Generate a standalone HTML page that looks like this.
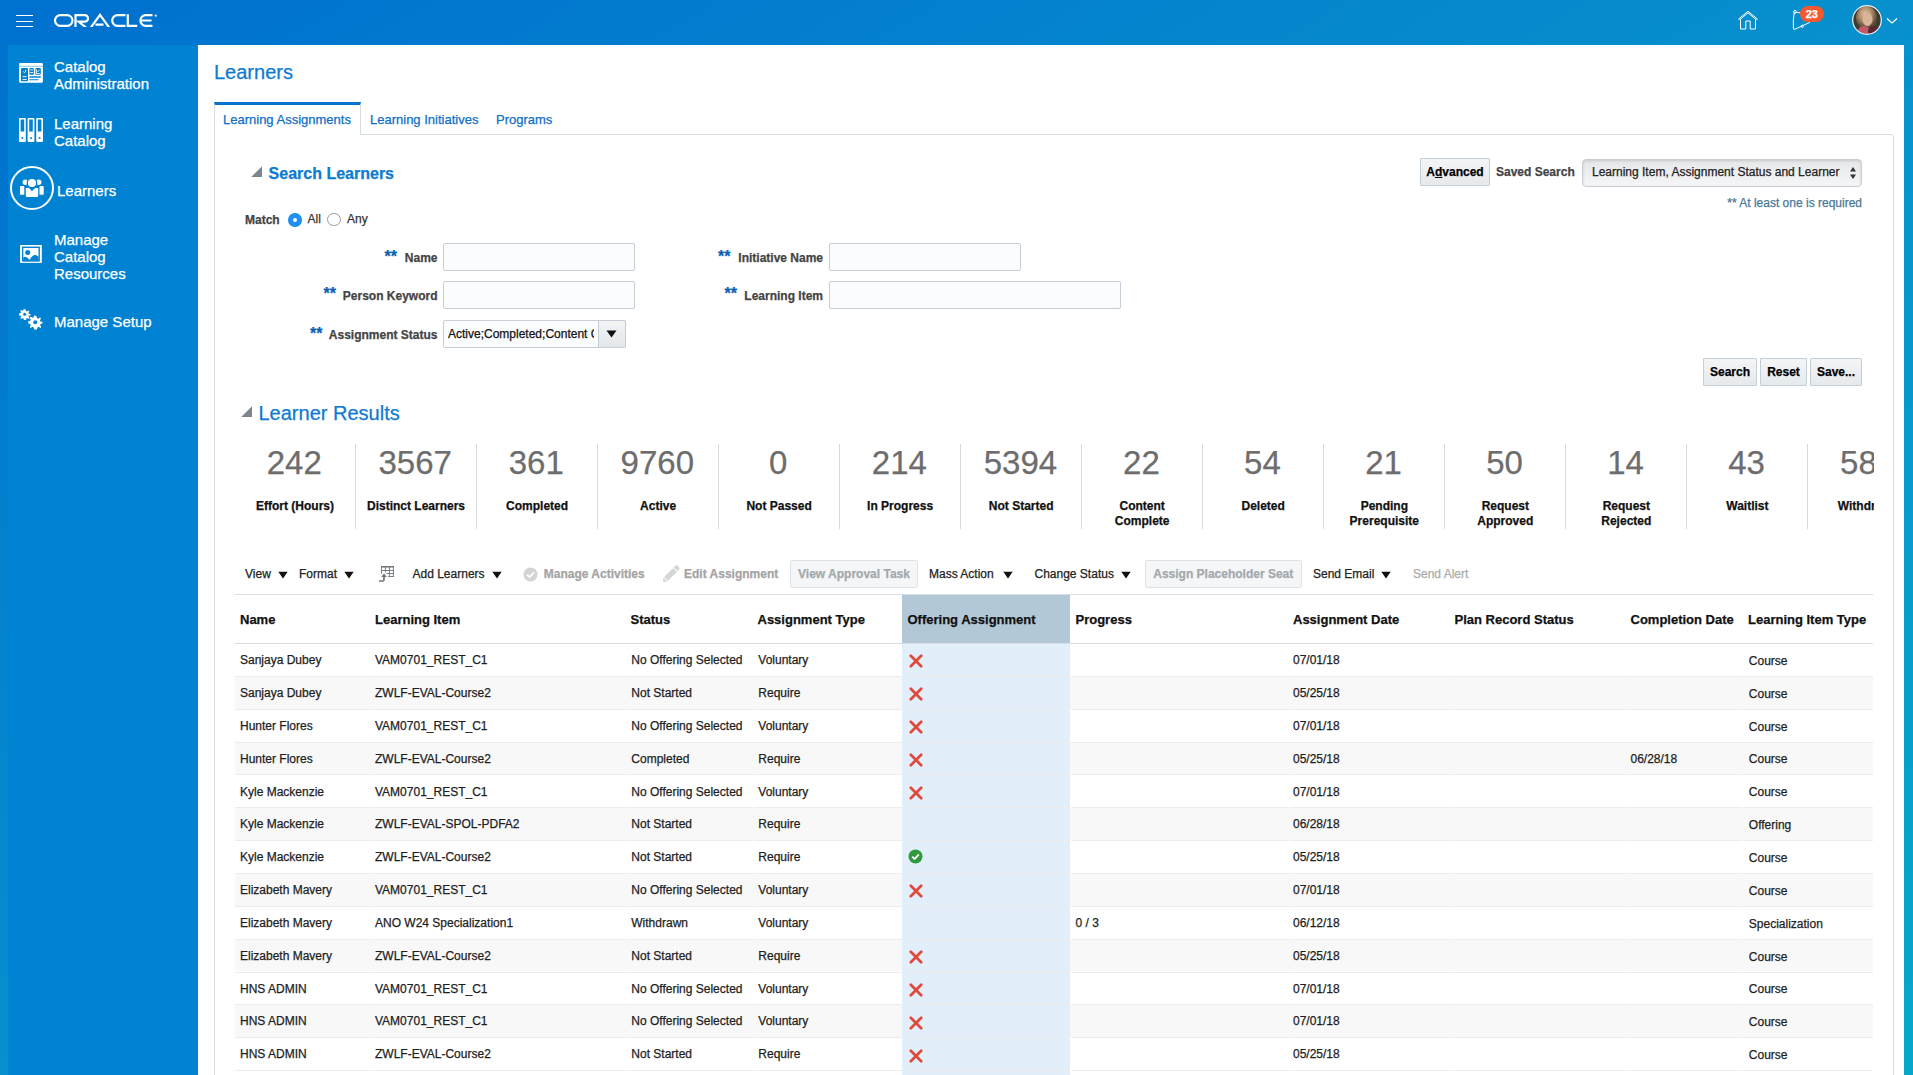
<!DOCTYPE html>
<html><head><meta charset="utf-8"><title>Learners</title>
<style>
html,body{margin:0;padding:0;width:1913px;height:1075px;overflow:hidden;background:#fff}
body{position:relative;font-family:"Liberation Sans",sans-serif}
.t{position:absolute;white-space:nowrap;-webkit-text-stroke-width:0.25px}
.r{position:absolute}
</style></head><body>
<div class="r" style="left:0;top:0;width:1913px;height:1075px;background:linear-gradient(to bottom right,#0070cf 0%,#0790cd 50%,#05a8c9 100%)"></div>
<div class="r" style="left:8.0px;top:45.00px;width:190.0px;height:1030.00px;background:#0082d2"></div>
<div class="r" style="left:198.0px;top:45.00px;width:1706.0px;height:1030.00px;background:#fff"></div>
<div class="r" style="left:16.0px;top:15.00px;width:16.5px;height:1.40px;background:#fff"></div>
<div class="r" style="left:16.0px;top:20.50px;width:16.5px;height:1.40px;background:#fff"></div>
<div class="r" style="left:16.0px;top:26.00px;width:16.5px;height:1.40px;background:#fff"></div>
<svg class="r" style="left:53px;top:13px" width="106" height="16" viewBox="0 0 106 16">
<defs><clipPath id="lc"><rect x="0" y="0" width="106" height="13.95"/></clipPath></defs>
<g fill="none" stroke="#fff" stroke-width="2.2" clip-path="url(#lc)">
<rect x="2" y="2.2" width="17.5" height="10.6" rx="5.3"/>
<path d="M22.5 14V2.2h9.3a3.2 3.2 0 0 1 0 6.4h-6.2l7.5 6"/>
<path d="M37.5 15L47 1.9 56.5 15M42.5 11.7h8" />
<path d="M72.5 2.2h-8a5.3 5.3 0 0 0 0 10.6h8"/>
<path d="M74.8 1.2v11.6h9.5"/>
<path d="M99.5 2.2h-6.8a5.3 5.3 0 0 0 0 10.6h6.8M88.5 7.5h10"/>
</g>
<circle cx="102.8" cy="2.6" r="1.2" fill="#cfe3f5"/>
</svg>
<svg class="r" style="left:1736px;top:9px" width="24" height="22" viewBox="0 0 24 22">
<g fill="none" stroke="#fff" stroke-width="1">
<path d="M2.3 10.2L12 2.3l9.7 7.9"/><path d="M3.3 11L12 3.9l8.7 7.1"/>
<path d="M4.5 10.3v9.7h5.3v-8h4.4v8h5.3v-9.7"/>
</g></svg>
<svg class="r" style="left:1790px;top:9px" width="24" height="22" viewBox="0 0 24 22">
<g fill="none" stroke="#fff" stroke-width="1">
<path d="M6.2 3.2L19 5.5 19.5 13.5 5 20.2Q3.3 20.8 3.4 19 2.8 12 4.2 4 4.6 3 6.2 3.2z"/>
<circle cx="5" cy="2.8" r="1.4"/><circle cx="12.3" cy="17.3" r="1.1"/>
</g></svg>
<div class="r" style="left:1799.5px;top:6.00px;width:24.5px;height:15.50px;background:#f5582e;border-radius:8px"></div>
<div class="t" style="left:1799.5px;top:7.19px;font-size:11px;line-height:14px;color:#fff;font-weight:bold;width:24.5px;text-align:center">23</div>
<svg class="r" style="left:1852px;top:5px" width="30" height="30" viewBox="0 0 30 30">
<defs><clipPath id="av"><circle cx="15" cy="15" r="14"/></clipPath>
<radialGradient id="hair" cx="45%" cy="35%" r="55%"><stop offset="0" stop-color="#e0c8a8"/><stop offset=".5" stop-color="#b89470"/><stop offset="1" stop-color="#5a4a38"/></radialGradient></defs>
<g clip-path="url(#av)">
<rect width="30" height="30" fill="#3e3a2c"/>
<ellipse cx="14.5" cy="13" rx="10.5" ry="12" fill="url(#hair)"/>
<ellipse cx="15.5" cy="14.5" rx="5" ry="6.5" fill="#d9b49a"/>
<ellipse cx="12" cy="26" rx="6" ry="5" fill="#c0586a"/>
<ellipse cx="21" cy="26" rx="5" ry="5" fill="#5a2a30"/>
</g>
<circle cx="15" cy="15" r="14.3" fill="none" stroke="#e8eef2" stroke-width="1.2"/>
</svg>
<svg class="r" style="left:1886px;top:17px" width="12" height="8" viewBox="0 0 12 8"><path d="M1 1.5l5 4.5 5-4.5" fill="none" stroke="#fff" stroke-width="1.2"/></svg>
<div class="t" style="left:54.0px;top:56.90px;font-size:15px;line-height:19px;color:#fff;font-weight:normal;">Catalog</div>
<div class="t" style="left:54.0px;top:74.30px;font-size:15px;line-height:19px;color:#fff;font-weight:normal;">Administration</div>
<div class="t" style="left:54.0px;top:113.70px;font-size:15px;line-height:19px;color:#fff;font-weight:normal;">Learning</div>
<div class="t" style="left:54.0px;top:131.30px;font-size:15px;line-height:19px;color:#fff;font-weight:normal;">Catalog</div>
<div class="t" style="left:57.0px;top:180.80px;font-size:15px;line-height:19px;color:#fff;font-weight:normal;">Learners</div>
<div class="t" style="left:54.0px;top:229.80px;font-size:15px;line-height:19px;color:#fff;font-weight:normal;">Manage</div>
<div class="t" style="left:54.0px;top:247.30px;font-size:15px;line-height:19px;color:#fff;font-weight:normal;">Catalog</div>
<div class="t" style="left:54.0px;top:264.30px;font-size:15px;line-height:19px;color:#fff;font-weight:normal;">Resources</div>
<div class="t" style="left:54.0px;top:312.30px;font-size:15px;line-height:19px;color:#fff;font-weight:normal;">Manage Setup</div>
<svg class="r" style="left:16px;top:58px" width="30" height="30" viewBox="0 0 30 30">
<rect x="3.1" y="4.9" width="23.8" height="19.9" rx="1.2" fill="#fff"/>
<rect x="3.1" y="7.8" width="23.8" height="1" fill="#0082d2" opacity=".45"/>
<g fill="#0082d2">
<rect x="5" y="9.9" width="7" height="13.3" rx="1"/>
<rect x="13.4" y="10" width="4.5" height="6.7" rx="1"/>
<rect x="19.3" y="10" width="5.5" height="6.7" rx="1"/>
<rect x="13.2" y="18.3" width="11.8" height="1.4" rx=".7"/>
<rect x="13.2" y="21.2" width="9.5" height="1.1" rx=".55"/>
</g>
<g fill="none" stroke="#fff" stroke-width=".9">
<path d="M7 13.3l1.4 1.4 1.6-1.6"/><path d="M14.2 14.5h2.9"/><path d="M20.4 11.3v4.2h3.3M21.5 14l2-2.2"/>
</g>
<g fill="#fff"><rect x="6.6" y="18.2" width="4" height=".9"/><rect x="6.6" y="21" width="4" height=".9"/><circle cx="9.6" cy="12.4" r=".6"/></g>
<rect x="14.2" y="11" width="2.9" height="1.6" fill="#fff" opacity=".5"/>
</svg>
<svg class="r" style="left:19px;top:118px" width="25" height="25" viewBox="0 0 25 25">
<g fill="#fff"><rect x="0" y="0" width="6.8" height="24" rx="1"/><rect x="8.6" y="0" width="6.8" height="24" rx="1"/><rect x="17.2" y="0" width="6.8" height="24" rx="1"/></g>
<g fill="#0082d2"><rect x="1.6" y="1.5" width="3.6" height="12"/><rect x="10.2" y="1.5" width="3.6" height="12"/><rect x="18.8" y="1.5" width="3.6" height="12"/>
<circle cx="3.4" cy="20" r="1"/><circle cx="12" cy="20" r="1"/><circle cx="20.6" cy="20" r="1"/></g>
</svg>
<svg class="r" style="left:9px;top:165px" width="46" height="46" viewBox="0 0 46 46">
<circle cx="23" cy="23" r="21" fill="none" stroke="#fff" stroke-width="2"/>
<g fill="#fff">
<circle cx="16.3" cy="17.2" r="2.7"/><circle cx="29.7" cy="17.2" r="2.7"/>
</g>
<circle cx="23" cy="18" r="5.4" fill="#0082d2"/>
<circle cx="23" cy="18" r="4.1" fill="#fff"/>
<g fill="#fff">
<path d="M17.6 22.9h2.4l3 3.4 3-3.4h2.4q.8 0 .8.8v7.4q0 .8-.8.8H17.6q-.8 0-.8-.8v-7.4q0-.8.8-.8z"/>
<path d="M12 21h2.3q1 0 1 1v7q0 .8-.8.8H11.8q-.8 0-.8-.8v-7q0-1 1-1z"/>
<path d="M31.7 21h2q1 0 1 1v7q0 .8-.8.8h-2.6q-.8 0-.8-.8v-7q0-1 1.2-1z"/>
</g>
</svg>
<svg class="r" style="left:14px;top:238px" width="34" height="32" viewBox="0 0 34 32">
<rect x="6.1" y="7" width="21.7" height="17.9" fill="#fff"/>
<rect x="8" y="8.6" width="17.9" height="14.8" fill="#0082d2"/>
<rect x="9.3" y="10" width="15.2" height="12" fill="#fff"/>
<circle cx="13.7" cy="14.4" r="2.5" fill="#0082d2"/>
<path d="M9.2 19.6Q10.5 18.5 11.9 19Q13.5 19.8 15.6 21.7Q18.5 16.5 21.4 17Q23 17.3 24.6 18.8V23.5H9.2z" fill="#0082d2"/>
</svg>
<svg class="r" style="left:18px;top:307px" width="26" height="24" viewBox="0 0 26 24">
<g fill="#fff" transform="translate(-0.3 1)">
<path id="g1" d="M7 1.2l1 .2.4 1.6 1 .5 1.4-.9.8.7-.9 1.4.5 1 1.6.4.1 1.1-1.6.5-.4 1 .9 1.4-.7.8-1.4-.9-1 .5-.4 1.6H6.2l-.4-1.6-1-.5-1.4.9-.8-.7.9-1.4-.5-1-1.6-.4V5.5l1.6-.4.4-1-.9-1.4.8-.8 1.4.9 1-.5.4-1.6z"/>
</g>
<circle cx="6.7" cy="7.3" r="1.5" fill="#0082d2"/>
<g transform="translate(8.5 7.3) scale(1.25)" fill="#fff">
<path d="M7 1.2l1 .2.4 1.6 1 .5 1.4-.9.8.7-.9 1.4.5 1 1.6.4.1 1.1-1.6.5-.4 1 .9 1.4-.7.8-1.4-.9-1 .5-.4 1.6H6.2l-.4-1.6-1-.5-1.4.9-.8-.7.9-1.4-.5-1-1.6-.4V5.5l1.6-.4.4-1-.9-1.4.8-.8 1.4.9 1-.5.4-1.6z"/>
<circle cx="7" cy="6.3" r="1.6" fill="#0082d2"/>
</g>
</svg>
<div class="t" style="left:214.0px;top:59.66px;font-size:20px;line-height:25px;color:#0e7bd0;font-weight:normal;">Learners</div>
<div class="r" style="left:214.0px;top:134.00px;width:1680.0px;height:941.00px;border-top:1px solid #d4dde4;border-left:1px solid #d4dde4;border-right:1px solid #d4dde4;border-top-right-radius:4px;box-sizing:border-box;background:#fff"></div>
<div class="r" style="left:214.0px;top:102.00px;width:147.0px;height:33.00px;background:#fff;border-left:1px solid #d4dde4;border-right:1px solid #d4dde4;border-top:3px solid #0572ce;box-sizing:border-box"></div>
<div class="t" style="left:223.0px;top:110.69px;font-size:13px;line-height:17px;color:#0f6fc6;font-weight:normal;">Learning Assignments</div>
<div class="t" style="left:370.0px;top:110.69px;font-size:13px;line-height:17px;color:#0f6fc6;font-weight:normal;">Learning Initiatives</div>
<div class="t" style="left:496.0px;top:110.69px;font-size:13px;line-height:17px;color:#0f6fc6;font-weight:normal;">Programs</div>
<svg class="r" style="left:251px;top:166px" width="12" height="12" viewBox="0 0 12 12"><path d="M11 0.2V11H0.2z" fill="#7d868e"/></svg>
<div class="t" style="left:268.6px;top:163.95px;font-size:16px;line-height:20px;color:#0b7cd0;font-weight:bold;">Search Learners</div>
<div class="t" style="left:245.0px;top:212.84px;font-size:12px;line-height:15px;color:#444;font-weight:bold;">Match</div>
<div class="r" style="left:288.0px;top:213.00px;width:13.5px;height:13.50px;border-radius:50%;background:#1e90f3"></div>
<div class="r" style="left:292.5px;top:217.50px;width:4.5px;height:4.50px;border-radius:50%;background:#fff"></div>
<div class="t" style="left:307.5px;top:212.04px;font-size:12px;line-height:15px;color:#333;font-weight:normal;">All</div>
<div class="r" style="left:327.0px;top:212.50px;width:13.5px;height:13.50px;border-radius:50%;border:1px solid #9a9a9a;box-sizing:border-box;background:#fff"></div>
<div class="t" style="left:347.0px;top:212.04px;font-size:12px;line-height:15px;color:#333;font-weight:normal;">Any</div>
<div class="t" style="left:137.5px;top:251.34px;font-size:12px;line-height:15px;color:#444;font-weight:bold;width:300px;text-align:right">Name</div>
<div class="t" style="left:357.0px;top:246.95px;font-size:16px;line-height:20px;color:#0b5fb5;font-weight:bold;width:40px;text-align:right">**</div>
<div class="t" style="left:137.5px;top:288.84px;font-size:12px;line-height:15px;color:#444;font-weight:bold;width:300px;text-align:right">Person Keyword</div>
<div class="t" style="left:296.0px;top:284.45px;font-size:16px;line-height:20px;color:#0b5fb5;font-weight:bold;width:40px;text-align:right">**</div>
<div class="t" style="left:137.5px;top:328.34px;font-size:12px;line-height:15px;color:#444;font-weight:bold;width:300px;text-align:right">Assignment Status</div>
<div class="t" style="left:282.5px;top:323.95px;font-size:16px;line-height:20px;color:#0b5fb5;font-weight:bold;width:40px;text-align:right">**</div>
<div class="t" style="left:523.0px;top:251.34px;font-size:12px;line-height:15px;color:#444;font-weight:bold;width:300px;text-align:right">Initiative Name</div>
<div class="t" style="left:690.5px;top:246.95px;font-size:16px;line-height:20px;color:#0b5fb5;font-weight:bold;width:40px;text-align:right">**</div>
<div class="t" style="left:523.0px;top:288.84px;font-size:12px;line-height:15px;color:#444;font-weight:bold;width:300px;text-align:right">Learning Item</div>
<div class="t" style="left:697.0px;top:284.45px;font-size:16px;line-height:20px;color:#0b5fb5;font-weight:bold;width:40px;text-align:right">**</div>
<div class="r" style="left:443.0px;top:243.00px;width:192.0px;height:28.00px;border:1px solid #c5ced6;border-radius:2px;background:#fbfcfe;box-sizing:border-box"></div>
<div class="r" style="left:443.0px;top:281.00px;width:192.0px;height:28.00px;border:1px solid #c5ced6;border-radius:2px;background:#fbfcfe;box-sizing:border-box"></div>
<div class="r" style="left:829.0px;top:243.00px;width:192.0px;height:28.00px;border:1px solid #c5ced6;border-radius:2px;background:#fbfcfe;box-sizing:border-box"></div>
<div class="r" style="left:829.0px;top:281.00px;width:292.0px;height:28.00px;border:1px solid #c5ced6;border-radius:2px;background:#fbfcfe;box-sizing:border-box"></div>
<div class="r" style="left:443.0px;top:320.00px;width:183.0px;height:28.00px;border:1px solid #c5ced6;border-radius:2px;background:#fbfcfe;box-sizing:border-box"></div>
<div class="r" style="left:598.0px;top:320.00px;width:28.0px;height:28.00px;border:1px solid #c5ced6;border-radius:0 2px 2px 0;background:linear-gradient(#f2f4f6,#e3e7ea);box-sizing:border-box"></div>
<svg class="r" style="left:606px;top:330px" width="11" height="8" viewBox="0 0 11 8"><path d="M0.5 0.5h10L5.5 7.5z" fill="#111"/></svg>
<div class="t" style="left:448.0px;top:326.84px;font-size:12px;line-height:15px;color:#111;font-weight:normal;width:146px;overflow:hidden;white-space:nowrap">Active;Completed;Content Complete</div>
<div class="r" style="left:1420.0px;top:158.00px;width:70.0px;height:28.00px;border:1px solid #c4ced7;border-radius:1px;background:linear-gradient(#f4f5f7,#e6e9ec);box-sizing:border-box"></div>
<div class="t" style="left:1420.0px;top:164.74px;font-size:12px;line-height:15px;color:#000;font-weight:bold;width:70px;text-align:center">A<u style="text-decoration:underline">d</u>vanced</div>
<div class="t" style="left:1496.0px;top:164.74px;font-size:12px;line-height:15px;color:#444;font-weight:bold;">Saved Search</div>
<div class="r" style="left:1582.0px;top:159.00px;width:280.0px;height:28.00px;border:1px solid #c8ced4;border-radius:4px;background:linear-gradient(#e6e7e8,#f5f6f7);box-shadow:inset 0 1px 3px rgba(0,0,0,.14);box-sizing:border-box"></div>
<div class="t" style="left:1592.0px;top:164.74px;font-size:12px;line-height:15px;color:#222;font-weight:normal;">Learning Item, Assignment Status and Learner</div>
<svg class="r" style="left:1849px;top:166px" width="8" height="14" viewBox="0 0 8 14"><path d="M4 1L7 5.5H1zM4 13L7 8.5H1z" fill="#333"/></svg>
<div class="t" style="left:1662.0px;top:195.84px;font-size:12px;line-height:15px;color:#4a7896;font-weight:normal;width:200px;text-align:right">** At least one is required</div>
<div class="r" style="left:1703.0px;top:358.00px;width:54.0px;height:28.00px;border:1px solid #c4ced7;border-radius:1px;background:linear-gradient(#f4f5f7,#e6e9ec);box-sizing:border-box"></div>
<div class="t" style="left:1703.0px;top:364.54px;font-size:12px;line-height:15px;color:#000;font-weight:bold;width:54px;text-align:center">Search</div>
<div class="r" style="left:1760.0px;top:358.00px;width:47.0px;height:28.00px;border:1px solid #c4ced7;border-radius:1px;background:linear-gradient(#f4f5f7,#e6e9ec);box-sizing:border-box"></div>
<div class="t" style="left:1760.0px;top:364.54px;font-size:12px;line-height:15px;color:#000;font-weight:bold;width:47px;text-align:center">Reset</div>
<div class="r" style="left:1810.0px;top:358.00px;width:52.0px;height:28.00px;border:1px solid #c4ced7;border-radius:1px;background:linear-gradient(#f4f5f7,#e6e9ec);box-sizing:border-box"></div>
<div class="t" style="left:1810.0px;top:364.54px;font-size:12px;line-height:15px;color:#000;font-weight:bold;width:52px;text-align:center">Save...</div>
<svg class="r" style="left:241px;top:406px" width="12" height="12" viewBox="0 0 12 12"><path d="M11 0.2V11H0.2z" fill="#7d868e"/></svg>
<div class="t" style="left:258.5px;top:400.56px;font-size:20px;line-height:25px;color:#0e7bd0;font-weight:normal;">Learner Results</div>
<div class="r" style="left:234px;top:440px;width:1639.5px;height:100px;overflow:hidden">
<div class="t" style="left:-0.3px;top:1.86px;font-size:33px;line-height:42px;color:#6d6d6d;font-weight:normal;width:121px;text-align:center">242</div>
<div class="t" style="left:0.5px;top:59.14px;font-size:12px;line-height:15px;color:#111;font-weight:bold;width:121px;text-align:center">Effort (Hours)</div>
<div class="t" style="left:120.7px;top:1.86px;font-size:33px;line-height:42px;color:#6d6d6d;font-weight:normal;width:121px;text-align:center">3567</div>
<div class="t" style="left:121.5px;top:59.14px;font-size:12px;line-height:15px;color:#111;font-weight:bold;width:121px;text-align:center">Distinct Learners</div>
<div class="r" style="left:121.0px;top:4.00px;width:1.0px;height:84.50px;background:#d9d9d9"></div>
<div class="t" style="left:241.8px;top:1.86px;font-size:33px;line-height:42px;color:#6d6d6d;font-weight:normal;width:121px;text-align:center">361</div>
<div class="t" style="left:242.6px;top:59.14px;font-size:12px;line-height:15px;color:#111;font-weight:bold;width:121px;text-align:center">Completed</div>
<div class="r" style="left:242.0px;top:4.00px;width:1.0px;height:84.50px;background:#d9d9d9"></div>
<div class="t" style="left:362.8px;top:1.86px;font-size:33px;line-height:42px;color:#6d6d6d;font-weight:normal;width:121px;text-align:center">9760</div>
<div class="t" style="left:363.6px;top:59.14px;font-size:12px;line-height:15px;color:#111;font-weight:bold;width:121px;text-align:center">Active</div>
<div class="r" style="left:363.1px;top:4.00px;width:1.0px;height:84.50px;background:#d9d9d9"></div>
<div class="t" style="left:483.8px;top:1.86px;font-size:33px;line-height:42px;color:#6d6d6d;font-weight:normal;width:121px;text-align:center">0</div>
<div class="t" style="left:484.6px;top:59.14px;font-size:12px;line-height:15px;color:#111;font-weight:bold;width:121px;text-align:center">Not Passed</div>
<div class="r" style="left:484.1px;top:4.00px;width:1.0px;height:84.50px;background:#d9d9d9"></div>
<div class="t" style="left:604.9px;top:1.86px;font-size:33px;line-height:42px;color:#6d6d6d;font-weight:normal;width:121px;text-align:center">214</div>
<div class="t" style="left:605.6px;top:59.14px;font-size:12px;line-height:15px;color:#111;font-weight:bold;width:121px;text-align:center">In Progress</div>
<div class="r" style="left:605.1px;top:4.00px;width:1.0px;height:84.50px;background:#d9d9d9"></div>
<div class="t" style="left:725.9px;top:1.86px;font-size:33px;line-height:42px;color:#6d6d6d;font-weight:normal;width:121px;text-align:center">5394</div>
<div class="t" style="left:726.7px;top:59.14px;font-size:12px;line-height:15px;color:#111;font-weight:bold;width:121px;text-align:center">Not Started</div>
<div class="r" style="left:726.1px;top:4.00px;width:1.0px;height:84.50px;background:#d9d9d9"></div>
<div class="t" style="left:846.9px;top:1.86px;font-size:33px;line-height:42px;color:#6d6d6d;font-weight:normal;width:121px;text-align:center">22</div>
<div class="t" style="left:847.7px;top:59.14px;font-size:12px;line-height:15px;color:#111;font-weight:bold;width:121px;text-align:center">Content<br>Complete</div>
<div class="r" style="left:847.2px;top:4.00px;width:1.0px;height:84.50px;background:#d9d9d9"></div>
<div class="t" style="left:967.9px;top:1.86px;font-size:33px;line-height:42px;color:#6d6d6d;font-weight:normal;width:121px;text-align:center">54</div>
<div class="t" style="left:968.7px;top:59.14px;font-size:12px;line-height:15px;color:#111;font-weight:bold;width:121px;text-align:center">Deleted</div>
<div class="r" style="left:968.2px;top:4.00px;width:1.0px;height:84.50px;background:#d9d9d9"></div>
<div class="t" style="left:1089.0px;top:1.86px;font-size:33px;line-height:42px;color:#6d6d6d;font-weight:normal;width:121px;text-align:center">21</div>
<div class="t" style="left:1089.8px;top:59.14px;font-size:12px;line-height:15px;color:#111;font-weight:bold;width:121px;text-align:center">Pending<br>Prerequisite</div>
<div class="r" style="left:1089.2px;top:4.00px;width:1.0px;height:84.50px;background:#d9d9d9"></div>
<div class="t" style="left:1210.0px;top:1.86px;font-size:33px;line-height:42px;color:#6d6d6d;font-weight:normal;width:121px;text-align:center">50</div>
<div class="t" style="left:1210.8px;top:59.14px;font-size:12px;line-height:15px;color:#111;font-weight:bold;width:121px;text-align:center">Request<br>Approved</div>
<div class="r" style="left:1210.3px;top:4.00px;width:1.0px;height:84.50px;background:#d9d9d9"></div>
<div class="t" style="left:1331.0px;top:1.86px;font-size:33px;line-height:42px;color:#6d6d6d;font-weight:normal;width:121px;text-align:center">14</div>
<div class="t" style="left:1331.8px;top:59.14px;font-size:12px;line-height:15px;color:#111;font-weight:bold;width:121px;text-align:center">Request<br>Rejected</div>
<div class="r" style="left:1331.3px;top:4.00px;width:1.0px;height:84.50px;background:#d9d9d9"></div>
<div class="t" style="left:1452.1px;top:1.86px;font-size:33px;line-height:42px;color:#6d6d6d;font-weight:normal;width:121px;text-align:center">43</div>
<div class="t" style="left:1452.9px;top:59.14px;font-size:12px;line-height:15px;color:#111;font-weight:bold;width:121px;text-align:center">Waitlist</div>
<div class="r" style="left:1452.3px;top:4.00px;width:1.0px;height:84.50px;background:#d9d9d9"></div>
<div class="t" style="left:1573.1px;top:1.86px;font-size:33px;line-height:42px;color:#6d6d6d;font-weight:normal;width:121px;text-align:center">580</div>
<div class="t" style="left:1573.9px;top:59.14px;font-size:12px;line-height:15px;color:#111;font-weight:bold;width:121px;text-align:center">Withdrawn</div>
<div class="r" style="left:1573.4px;top:4.00px;width:1.0px;height:84.50px;background:#d9d9d9"></div>
</div>
<div class="t" style="left:245.0px;top:566.54px;font-size:12px;line-height:15px;color:#222;font-weight:normal;">View</div>
<svg class="r" style="left:278px;top:571px" width="10" height="8" viewBox="0 0 10 8"><path d="M0.3 0.8h9.4L5 7.6z" fill="#111"/></svg>
<div class="t" style="left:299.0px;top:566.54px;font-size:12px;line-height:15px;color:#222;font-weight:normal;">Format</div>
<svg class="r" style="left:343.5px;top:571px" width="10" height="8" viewBox="0 0 10 8"><path d="M0.3 0.8h9.4L5 7.6z" fill="#111"/></svg>
<svg class="r" style="left:374px;top:562px" width="26" height="24" viewBox="0 0 26 24">
<g fill="none" stroke="#6f767b" stroke-width="0.9">
<path d="M7.1 4.6h12.8M7.1 8.5h12.8M12.4 11.5h7.5M14.2 14.5h5.7M7.5 4.1v7.5M11.4 4.1v6.3M15.4 4.1v10.8M19.4 4.1v10.8"/>
</g>
<rect x="7.1" y="4.1" width="12.8" height="1.4" fill="#6f767b"/>
<path d="M10 11.6L12.9 14.9H7.1z" fill="#6f767b"/>
<path d="M10 14.5V17.6Q10 19 8.6 19H5.1" fill="none" stroke="#6f767b" stroke-width="1.7"/>
</svg>
<div class="t" style="left:412.5px;top:566.54px;font-size:12px;line-height:15px;color:#222;font-weight:normal;">Add Learners</div>
<svg class="r" style="left:491.5px;top:571px" width="10" height="8" viewBox="0 0 10 8"><path d="M0.3 0.8h9.4L5 7.6z" fill="#111"/></svg>
<svg class="r" style="left:522.6px;top:566.7px" width="15" height="15" viewBox="0 0 15 15"><circle cx="7.5" cy="7.5" r="7" fill="#d4d4d4"/><path d="M4 7.6l2.5 2.5 4.7-4.7" fill="none" stroke="#fff" stroke-width="1.8"/></svg>
<div class="t" style="left:543.8px;top:566.54px;font-size:12px;line-height:15px;color:#a4a4a4;font-weight:bold;">Manage Activities</div>
<svg class="r" style="left:658px;top:560px" width="30" height="26" viewBox="0 0 30 26"><g fill="#d3d5d7"><path d="M5 22L9.4 21.4 5.6 17.6z"/><path d="M10 20.8L6.2 17 15 8.2 18.8 12z"/><path d="M19.5 11.3L15.7 7.5 17.8 5.4Q18.6 4.6 19.4 5.4L21.4 7.4Q22.2 8.2 21.4 9z"/></g></svg>
<div class="t" style="left:684.0px;top:566.54px;font-size:12px;line-height:15px;color:#a4a4a4;font-weight:bold;">Edit Assignment</div>
<div class="r" style="left:790.0px;top:560.00px;width:128.0px;height:27.50px;border:1px solid #dde2e6;border-radius:2px;background:#f5f6f7;box-sizing:border-box"></div>
<div class="t" style="left:790.0px;top:566.74px;font-size:12px;line-height:15px;color:#a3a9ad;font-weight:bold;width:128px;text-align:center">View Approval Task</div>
<div class="t" style="left:929.0px;top:566.54px;font-size:12px;line-height:15px;color:#222;font-weight:normal;">Mass Action</div>
<svg class="r" style="left:1002.5px;top:571px" width="10" height="8" viewBox="0 0 10 8"><path d="M0.3 0.8h9.4L5 7.6z" fill="#111"/></svg>
<div class="t" style="left:1034.5px;top:566.54px;font-size:12px;line-height:15px;color:#222;font-weight:normal;">Change Status</div>
<svg class="r" style="left:1120.5px;top:571px" width="10" height="8" viewBox="0 0 10 8"><path d="M0.3 0.8h9.4L5 7.6z" fill="#111"/></svg>
<div class="r" style="left:1145.0px;top:560.00px;width:156.5px;height:27.50px;border:1px solid #dde2e6;border-radius:2px;background:#f5f6f7;box-sizing:border-box"></div>
<div class="t" style="left:1145.0px;top:566.74px;font-size:12px;line-height:15px;color:#a3a9ad;font-weight:bold;width:156.5px;text-align:center">Assign Placeholder Seat</div>
<div class="t" style="left:1313.0px;top:566.54px;font-size:12px;line-height:15px;color:#222;font-weight:normal;">Send Email</div>
<svg class="r" style="left:1380.5px;top:571px" width="10" height="8" viewBox="0 0 10 8"><path d="M0.3 0.8h9.4L5 7.6z" fill="#111"/></svg>
<div class="t" style="left:1413.0px;top:566.54px;font-size:12px;line-height:15px;color:#ababab;font-weight:normal;">Send Alert</div>
<div class="r" style="left:234.5px;top:594.00px;width:1638.5px;height:1.00px;background:#d7dfe6"></div>
<div class="r" style="left:902.0px;top:595.00px;width:168.0px;height:48.50px;background:#b3c8d7"></div>
<div class="r" style="left:902.0px;top:644.30px;width:168.0px;height:431.00px;background:#e2effb"></div>
<div class="t" style="left:240.0px;top:610.69px;font-size:13px;line-height:17px;color:#111;font-weight:bold;">Name</div>
<div class="t" style="left:375.0px;top:610.69px;font-size:13px;line-height:17px;color:#111;font-weight:bold;">Learning Item</div>
<div class="t" style="left:630.5px;top:610.69px;font-size:13px;line-height:17px;color:#111;font-weight:bold;">Status</div>
<div class="t" style="left:757.5px;top:610.69px;font-size:13px;line-height:17px;color:#111;font-weight:bold;">Assignment Type</div>
<div class="t" style="left:907.5px;top:610.69px;font-size:13px;line-height:17px;color:#111;font-weight:bold;">Offering Assignment</div>
<div class="t" style="left:1075.5px;top:610.69px;font-size:13px;line-height:17px;color:#111;font-weight:bold;">Progress</div>
<div class="t" style="left:1293.0px;top:610.69px;font-size:13px;line-height:17px;color:#111;font-weight:bold;">Assignment Date</div>
<div class="t" style="left:1454.5px;top:610.69px;font-size:13px;line-height:17px;color:#111;font-weight:bold;">Plan Record Status</div>
<div class="t" style="left:1630.5px;top:610.69px;font-size:13px;line-height:17px;color:#111;font-weight:bold;">Completion Date</div>
<div class="t" style="left:1748.0px;top:610.69px;font-size:13px;line-height:17px;color:#111;font-weight:bold;">Learning Item Type</div>
<div class="r" style="left:234.5px;top:643.00px;width:1638.5px;height:1.30px;background:#d5dee6"></div>
<div class="r" style="left:234.5px;top:675.85px;width:135.0px;height:1.00px;background:#ececec"></div>
<div class="r" style="left:370.5px;top:675.85px;width:254.5px;height:1.00px;background:#ececec"></div>
<div class="r" style="left:626.0px;top:675.85px;width:126.0px;height:1.00px;background:#ececec"></div>
<div class="r" style="left:753.0px;top:675.85px;width:149.0px;height:1.00px;background:#ececec"></div>
<div class="r" style="left:903.0px;top:675.85px;width:167.0px;height:1.00px;background:#ececec"></div>
<div class="r" style="left:1071.0px;top:675.85px;width:216.5px;height:1.00px;background:#ececec"></div>
<div class="r" style="left:1288.5px;top:675.85px;width:160.5px;height:1.00px;background:#ececec"></div>
<div class="r" style="left:1450.0px;top:675.85px;width:175.0px;height:1.00px;background:#ececec"></div>
<div class="r" style="left:1626.0px;top:675.85px;width:116.5px;height:1.00px;background:#ececec"></div>
<div class="r" style="left:1743.5px;top:675.85px;width:129.5px;height:1.00px;background:#ececec"></div>
<div class="t" style="left:240.0px;top:653.14px;font-size:12px;line-height:15px;color:#1e1e1e;font-weight:normal;">Sanjaya Dubey</div>
<div class="t" style="left:375.0px;top:653.14px;font-size:12px;line-height:15px;color:#1e1e1e;font-weight:normal;">VAM0701_REST_C1</div>
<div class="t" style="left:631.3px;top:653.14px;font-size:12px;line-height:15px;color:#1e1e1e;font-weight:normal;">No Offering Selected</div>
<div class="t" style="left:758.3px;top:653.14px;font-size:12px;line-height:15px;color:#1e1e1e;font-weight:normal;">Voluntary</div>
<svg class="r" style="left:908.5px;top:654.30px" width="14" height="14" viewBox="0 0 14 14"><path d="M1.8 1.8l10.4 10.4M12.2 1.8l-10.4 10.4" stroke="#e0483b" stroke-width="2.7" stroke-linecap="round"/></svg>
<div class="t" style="left:1293.0px;top:653.14px;font-size:12px;line-height:15px;color:#1e1e1e;font-weight:normal;">07/01/18</div>
<div class="t" style="left:1748.8px;top:653.94px;font-size:12px;line-height:15px;color:#1e1e1e;font-weight:normal;">Course</div>
<div class="r" style="left:234.5px;top:676.85px;width:135.0px;height:31.85px;background:#f8f8f8"></div>
<div class="r" style="left:369.5px;top:676.85px;width:255.5px;height:31.85px;background:#f8f8f8"></div>
<div class="r" style="left:625.0px;top:676.85px;width:127.0px;height:31.85px;background:#f8f8f8"></div>
<div class="r" style="left:752.0px;top:676.85px;width:150.0px;height:31.85px;background:#f8f8f8"></div>
<div class="r" style="left:1070.0px;top:676.85px;width:217.5px;height:31.85px;background:#f8f8f8"></div>
<div class="r" style="left:1287.5px;top:676.85px;width:161.5px;height:31.85px;background:#f8f8f8"></div>
<div class="r" style="left:1449.0px;top:676.85px;width:176.0px;height:31.85px;background:#f8f8f8"></div>
<div class="r" style="left:1625.0px;top:676.85px;width:117.5px;height:31.85px;background:#f8f8f8"></div>
<div class="r" style="left:1742.5px;top:676.85px;width:130.5px;height:31.85px;background:#f8f8f8"></div>
<div class="r" style="left:234.5px;top:708.70px;width:135.0px;height:1.00px;background:#ececec"></div>
<div class="r" style="left:370.5px;top:708.70px;width:254.5px;height:1.00px;background:#ececec"></div>
<div class="r" style="left:626.0px;top:708.70px;width:126.0px;height:1.00px;background:#ececec"></div>
<div class="r" style="left:753.0px;top:708.70px;width:149.0px;height:1.00px;background:#ececec"></div>
<div class="r" style="left:903.0px;top:708.70px;width:167.0px;height:1.00px;background:#ececec"></div>
<div class="r" style="left:1071.0px;top:708.70px;width:216.5px;height:1.00px;background:#ececec"></div>
<div class="r" style="left:1288.5px;top:708.70px;width:160.5px;height:1.00px;background:#ececec"></div>
<div class="r" style="left:1450.0px;top:708.70px;width:175.0px;height:1.00px;background:#ececec"></div>
<div class="r" style="left:1626.0px;top:708.70px;width:116.5px;height:1.00px;background:#ececec"></div>
<div class="r" style="left:1743.5px;top:708.70px;width:129.5px;height:1.00px;background:#ececec"></div>
<div class="t" style="left:240.0px;top:685.99px;font-size:12px;line-height:15px;color:#1e1e1e;font-weight:normal;">Sanjaya Dubey</div>
<div class="t" style="left:375.0px;top:685.99px;font-size:12px;line-height:15px;color:#1e1e1e;font-weight:normal;">ZWLF-EVAL-Course2</div>
<div class="t" style="left:631.3px;top:685.99px;font-size:12px;line-height:15px;color:#1e1e1e;font-weight:normal;">Not Started</div>
<div class="t" style="left:758.3px;top:685.99px;font-size:12px;line-height:15px;color:#1e1e1e;font-weight:normal;">Require</div>
<svg class="r" style="left:908.5px;top:687.15px" width="14" height="14" viewBox="0 0 14 14"><path d="M1.8 1.8l10.4 10.4M12.2 1.8l-10.4 10.4" stroke="#e0483b" stroke-width="2.7" stroke-linecap="round"/></svg>
<div class="t" style="left:1293.0px;top:685.99px;font-size:12px;line-height:15px;color:#1e1e1e;font-weight:normal;">05/25/18</div>
<div class="t" style="left:1748.8px;top:686.79px;font-size:12px;line-height:15px;color:#1e1e1e;font-weight:normal;">Course</div>
<div class="r" style="left:234.5px;top:741.55px;width:135.0px;height:1.00px;background:#ececec"></div>
<div class="r" style="left:370.5px;top:741.55px;width:254.5px;height:1.00px;background:#ececec"></div>
<div class="r" style="left:626.0px;top:741.55px;width:126.0px;height:1.00px;background:#ececec"></div>
<div class="r" style="left:753.0px;top:741.55px;width:149.0px;height:1.00px;background:#ececec"></div>
<div class="r" style="left:903.0px;top:741.55px;width:167.0px;height:1.00px;background:#ececec"></div>
<div class="r" style="left:1071.0px;top:741.55px;width:216.5px;height:1.00px;background:#ececec"></div>
<div class="r" style="left:1288.5px;top:741.55px;width:160.5px;height:1.00px;background:#ececec"></div>
<div class="r" style="left:1450.0px;top:741.55px;width:175.0px;height:1.00px;background:#ececec"></div>
<div class="r" style="left:1626.0px;top:741.55px;width:116.5px;height:1.00px;background:#ececec"></div>
<div class="r" style="left:1743.5px;top:741.55px;width:129.5px;height:1.00px;background:#ececec"></div>
<div class="t" style="left:240.0px;top:718.84px;font-size:12px;line-height:15px;color:#1e1e1e;font-weight:normal;">Hunter Flores</div>
<div class="t" style="left:375.0px;top:718.84px;font-size:12px;line-height:15px;color:#1e1e1e;font-weight:normal;">VAM0701_REST_C1</div>
<div class="t" style="left:631.3px;top:718.84px;font-size:12px;line-height:15px;color:#1e1e1e;font-weight:normal;">No Offering Selected</div>
<div class="t" style="left:758.3px;top:718.84px;font-size:12px;line-height:15px;color:#1e1e1e;font-weight:normal;">Voluntary</div>
<svg class="r" style="left:908.5px;top:720.00px" width="14" height="14" viewBox="0 0 14 14"><path d="M1.8 1.8l10.4 10.4M12.2 1.8l-10.4 10.4" stroke="#e0483b" stroke-width="2.7" stroke-linecap="round"/></svg>
<div class="t" style="left:1293.0px;top:718.84px;font-size:12px;line-height:15px;color:#1e1e1e;font-weight:normal;">07/01/18</div>
<div class="t" style="left:1748.8px;top:719.64px;font-size:12px;line-height:15px;color:#1e1e1e;font-weight:normal;">Course</div>
<div class="r" style="left:234.5px;top:742.55px;width:135.0px;height:31.85px;background:#f8f8f8"></div>
<div class="r" style="left:369.5px;top:742.55px;width:255.5px;height:31.85px;background:#f8f8f8"></div>
<div class="r" style="left:625.0px;top:742.55px;width:127.0px;height:31.85px;background:#f8f8f8"></div>
<div class="r" style="left:752.0px;top:742.55px;width:150.0px;height:31.85px;background:#f8f8f8"></div>
<div class="r" style="left:1070.0px;top:742.55px;width:217.5px;height:31.85px;background:#f8f8f8"></div>
<div class="r" style="left:1287.5px;top:742.55px;width:161.5px;height:31.85px;background:#f8f8f8"></div>
<div class="r" style="left:1449.0px;top:742.55px;width:176.0px;height:31.85px;background:#f8f8f8"></div>
<div class="r" style="left:1625.0px;top:742.55px;width:117.5px;height:31.85px;background:#f8f8f8"></div>
<div class="r" style="left:1742.5px;top:742.55px;width:130.5px;height:31.85px;background:#f8f8f8"></div>
<div class="r" style="left:234.5px;top:774.40px;width:135.0px;height:1.00px;background:#ececec"></div>
<div class="r" style="left:370.5px;top:774.40px;width:254.5px;height:1.00px;background:#ececec"></div>
<div class="r" style="left:626.0px;top:774.40px;width:126.0px;height:1.00px;background:#ececec"></div>
<div class="r" style="left:753.0px;top:774.40px;width:149.0px;height:1.00px;background:#ececec"></div>
<div class="r" style="left:903.0px;top:774.40px;width:167.0px;height:1.00px;background:#ececec"></div>
<div class="r" style="left:1071.0px;top:774.40px;width:216.5px;height:1.00px;background:#ececec"></div>
<div class="r" style="left:1288.5px;top:774.40px;width:160.5px;height:1.00px;background:#ececec"></div>
<div class="r" style="left:1450.0px;top:774.40px;width:175.0px;height:1.00px;background:#ececec"></div>
<div class="r" style="left:1626.0px;top:774.40px;width:116.5px;height:1.00px;background:#ececec"></div>
<div class="r" style="left:1743.5px;top:774.40px;width:129.5px;height:1.00px;background:#ececec"></div>
<div class="t" style="left:240.0px;top:751.69px;font-size:12px;line-height:15px;color:#1e1e1e;font-weight:normal;">Hunter Flores</div>
<div class="t" style="left:375.0px;top:751.69px;font-size:12px;line-height:15px;color:#1e1e1e;font-weight:normal;">ZWLF-EVAL-Course2</div>
<div class="t" style="left:631.3px;top:751.69px;font-size:12px;line-height:15px;color:#1e1e1e;font-weight:normal;">Completed</div>
<div class="t" style="left:758.3px;top:751.69px;font-size:12px;line-height:15px;color:#1e1e1e;font-weight:normal;">Require</div>
<svg class="r" style="left:908.5px;top:752.85px" width="14" height="14" viewBox="0 0 14 14"><path d="M1.8 1.8l10.4 10.4M12.2 1.8l-10.4 10.4" stroke="#e0483b" stroke-width="2.7" stroke-linecap="round"/></svg>
<div class="t" style="left:1293.0px;top:751.69px;font-size:12px;line-height:15px;color:#1e1e1e;font-weight:normal;">05/25/18</div>
<div class="t" style="left:1630.5px;top:751.69px;font-size:12px;line-height:15px;color:#1e1e1e;font-weight:normal;">06/28/18</div>
<div class="t" style="left:1748.8px;top:752.49px;font-size:12px;line-height:15px;color:#1e1e1e;font-weight:normal;">Course</div>
<div class="r" style="left:234.5px;top:807.25px;width:135.0px;height:1.00px;background:#ececec"></div>
<div class="r" style="left:370.5px;top:807.25px;width:254.5px;height:1.00px;background:#ececec"></div>
<div class="r" style="left:626.0px;top:807.25px;width:126.0px;height:1.00px;background:#ececec"></div>
<div class="r" style="left:753.0px;top:807.25px;width:149.0px;height:1.00px;background:#ececec"></div>
<div class="r" style="left:903.0px;top:807.25px;width:167.0px;height:1.00px;background:#ececec"></div>
<div class="r" style="left:1071.0px;top:807.25px;width:216.5px;height:1.00px;background:#ececec"></div>
<div class="r" style="left:1288.5px;top:807.25px;width:160.5px;height:1.00px;background:#ececec"></div>
<div class="r" style="left:1450.0px;top:807.25px;width:175.0px;height:1.00px;background:#ececec"></div>
<div class="r" style="left:1626.0px;top:807.25px;width:116.5px;height:1.00px;background:#ececec"></div>
<div class="r" style="left:1743.5px;top:807.25px;width:129.5px;height:1.00px;background:#ececec"></div>
<div class="t" style="left:240.0px;top:784.54px;font-size:12px;line-height:15px;color:#1e1e1e;font-weight:normal;">Kyle Mackenzie</div>
<div class="t" style="left:375.0px;top:784.54px;font-size:12px;line-height:15px;color:#1e1e1e;font-weight:normal;">VAM0701_REST_C1</div>
<div class="t" style="left:631.3px;top:784.54px;font-size:12px;line-height:15px;color:#1e1e1e;font-weight:normal;">No Offering Selected</div>
<div class="t" style="left:758.3px;top:784.54px;font-size:12px;line-height:15px;color:#1e1e1e;font-weight:normal;">Voluntary</div>
<svg class="r" style="left:908.5px;top:785.70px" width="14" height="14" viewBox="0 0 14 14"><path d="M1.8 1.8l10.4 10.4M12.2 1.8l-10.4 10.4" stroke="#e0483b" stroke-width="2.7" stroke-linecap="round"/></svg>
<div class="t" style="left:1293.0px;top:784.54px;font-size:12px;line-height:15px;color:#1e1e1e;font-weight:normal;">07/01/18</div>
<div class="t" style="left:1748.8px;top:785.34px;font-size:12px;line-height:15px;color:#1e1e1e;font-weight:normal;">Course</div>
<div class="r" style="left:234.5px;top:808.25px;width:135.0px;height:31.85px;background:#f8f8f8"></div>
<div class="r" style="left:369.5px;top:808.25px;width:255.5px;height:31.85px;background:#f8f8f8"></div>
<div class="r" style="left:625.0px;top:808.25px;width:127.0px;height:31.85px;background:#f8f8f8"></div>
<div class="r" style="left:752.0px;top:808.25px;width:150.0px;height:31.85px;background:#f8f8f8"></div>
<div class="r" style="left:1070.0px;top:808.25px;width:217.5px;height:31.85px;background:#f8f8f8"></div>
<div class="r" style="left:1287.5px;top:808.25px;width:161.5px;height:31.85px;background:#f8f8f8"></div>
<div class="r" style="left:1449.0px;top:808.25px;width:176.0px;height:31.85px;background:#f8f8f8"></div>
<div class="r" style="left:1625.0px;top:808.25px;width:117.5px;height:31.85px;background:#f8f8f8"></div>
<div class="r" style="left:1742.5px;top:808.25px;width:130.5px;height:31.85px;background:#f8f8f8"></div>
<div class="r" style="left:234.5px;top:840.10px;width:135.0px;height:1.00px;background:#ececec"></div>
<div class="r" style="left:370.5px;top:840.10px;width:254.5px;height:1.00px;background:#ececec"></div>
<div class="r" style="left:626.0px;top:840.10px;width:126.0px;height:1.00px;background:#ececec"></div>
<div class="r" style="left:753.0px;top:840.10px;width:149.0px;height:1.00px;background:#ececec"></div>
<div class="r" style="left:903.0px;top:840.10px;width:167.0px;height:1.00px;background:#ececec"></div>
<div class="r" style="left:1071.0px;top:840.10px;width:216.5px;height:1.00px;background:#ececec"></div>
<div class="r" style="left:1288.5px;top:840.10px;width:160.5px;height:1.00px;background:#ececec"></div>
<div class="r" style="left:1450.0px;top:840.10px;width:175.0px;height:1.00px;background:#ececec"></div>
<div class="r" style="left:1626.0px;top:840.10px;width:116.5px;height:1.00px;background:#ececec"></div>
<div class="r" style="left:1743.5px;top:840.10px;width:129.5px;height:1.00px;background:#ececec"></div>
<div class="t" style="left:240.0px;top:817.39px;font-size:12px;line-height:15px;color:#1e1e1e;font-weight:normal;">Kyle Mackenzie</div>
<div class="t" style="left:375.0px;top:817.39px;font-size:12px;line-height:15px;color:#1e1e1e;font-weight:normal;">ZWLF-EVAL-SPOL-PDFA2</div>
<div class="t" style="left:631.3px;top:817.39px;font-size:12px;line-height:15px;color:#1e1e1e;font-weight:normal;">Not Started</div>
<div class="t" style="left:758.3px;top:817.39px;font-size:12px;line-height:15px;color:#1e1e1e;font-weight:normal;">Require</div>
<div class="t" style="left:1293.0px;top:817.39px;font-size:12px;line-height:15px;color:#1e1e1e;font-weight:normal;">06/28/18</div>
<div class="t" style="left:1748.8px;top:818.19px;font-size:12px;line-height:15px;color:#1e1e1e;font-weight:normal;">Offering</div>
<div class="r" style="left:234.5px;top:872.95px;width:135.0px;height:1.00px;background:#ececec"></div>
<div class="r" style="left:370.5px;top:872.95px;width:254.5px;height:1.00px;background:#ececec"></div>
<div class="r" style="left:626.0px;top:872.95px;width:126.0px;height:1.00px;background:#ececec"></div>
<div class="r" style="left:753.0px;top:872.95px;width:149.0px;height:1.00px;background:#ececec"></div>
<div class="r" style="left:903.0px;top:872.95px;width:167.0px;height:1.00px;background:#ececec"></div>
<div class="r" style="left:1071.0px;top:872.95px;width:216.5px;height:1.00px;background:#ececec"></div>
<div class="r" style="left:1288.5px;top:872.95px;width:160.5px;height:1.00px;background:#ececec"></div>
<div class="r" style="left:1450.0px;top:872.95px;width:175.0px;height:1.00px;background:#ececec"></div>
<div class="r" style="left:1626.0px;top:872.95px;width:116.5px;height:1.00px;background:#ececec"></div>
<div class="r" style="left:1743.5px;top:872.95px;width:129.5px;height:1.00px;background:#ececec"></div>
<div class="t" style="left:240.0px;top:850.24px;font-size:12px;line-height:15px;color:#1e1e1e;font-weight:normal;">Kyle Mackenzie</div>
<div class="t" style="left:375.0px;top:850.24px;font-size:12px;line-height:15px;color:#1e1e1e;font-weight:normal;">ZWLF-EVAL-Course2</div>
<div class="t" style="left:631.3px;top:850.24px;font-size:12px;line-height:15px;color:#1e1e1e;font-weight:normal;">Not Started</div>
<div class="t" style="left:758.3px;top:850.24px;font-size:12px;line-height:15px;color:#1e1e1e;font-weight:normal;">Require</div>
<svg class="r" style="left:907.5px;top:849.40px" width="15" height="15" viewBox="0 0 15 15"><circle cx="7.5" cy="7.5" r="7" fill="#2f9a3c"/><path d="M4.2 7.6l2.3 2.3 4.4-4.4" fill="none" stroke="#fff" stroke-width="1.8"/></svg>
<div class="t" style="left:1293.0px;top:850.24px;font-size:12px;line-height:15px;color:#1e1e1e;font-weight:normal;">05/25/18</div>
<div class="t" style="left:1748.8px;top:851.04px;font-size:12px;line-height:15px;color:#1e1e1e;font-weight:normal;">Course</div>
<div class="r" style="left:234.5px;top:873.95px;width:135.0px;height:31.85px;background:#f8f8f8"></div>
<div class="r" style="left:369.5px;top:873.95px;width:255.5px;height:31.85px;background:#f8f8f8"></div>
<div class="r" style="left:625.0px;top:873.95px;width:127.0px;height:31.85px;background:#f8f8f8"></div>
<div class="r" style="left:752.0px;top:873.95px;width:150.0px;height:31.85px;background:#f8f8f8"></div>
<div class="r" style="left:1070.0px;top:873.95px;width:217.5px;height:31.85px;background:#f8f8f8"></div>
<div class="r" style="left:1287.5px;top:873.95px;width:161.5px;height:31.85px;background:#f8f8f8"></div>
<div class="r" style="left:1449.0px;top:873.95px;width:176.0px;height:31.85px;background:#f8f8f8"></div>
<div class="r" style="left:1625.0px;top:873.95px;width:117.5px;height:31.85px;background:#f8f8f8"></div>
<div class="r" style="left:1742.5px;top:873.95px;width:130.5px;height:31.85px;background:#f8f8f8"></div>
<div class="r" style="left:234.5px;top:905.80px;width:135.0px;height:1.00px;background:#ececec"></div>
<div class="r" style="left:370.5px;top:905.80px;width:254.5px;height:1.00px;background:#ececec"></div>
<div class="r" style="left:626.0px;top:905.80px;width:126.0px;height:1.00px;background:#ececec"></div>
<div class="r" style="left:753.0px;top:905.80px;width:149.0px;height:1.00px;background:#ececec"></div>
<div class="r" style="left:903.0px;top:905.80px;width:167.0px;height:1.00px;background:#ececec"></div>
<div class="r" style="left:1071.0px;top:905.80px;width:216.5px;height:1.00px;background:#ececec"></div>
<div class="r" style="left:1288.5px;top:905.80px;width:160.5px;height:1.00px;background:#ececec"></div>
<div class="r" style="left:1450.0px;top:905.80px;width:175.0px;height:1.00px;background:#ececec"></div>
<div class="r" style="left:1626.0px;top:905.80px;width:116.5px;height:1.00px;background:#ececec"></div>
<div class="r" style="left:1743.5px;top:905.80px;width:129.5px;height:1.00px;background:#ececec"></div>
<div class="t" style="left:240.0px;top:883.09px;font-size:12px;line-height:15px;color:#1e1e1e;font-weight:normal;">Elizabeth Mavery</div>
<div class="t" style="left:375.0px;top:883.09px;font-size:12px;line-height:15px;color:#1e1e1e;font-weight:normal;">VAM0701_REST_C1</div>
<div class="t" style="left:631.3px;top:883.09px;font-size:12px;line-height:15px;color:#1e1e1e;font-weight:normal;">No Offering Selected</div>
<div class="t" style="left:758.3px;top:883.09px;font-size:12px;line-height:15px;color:#1e1e1e;font-weight:normal;">Voluntary</div>
<svg class="r" style="left:908.5px;top:884.25px" width="14" height="14" viewBox="0 0 14 14"><path d="M1.8 1.8l10.4 10.4M12.2 1.8l-10.4 10.4" stroke="#e0483b" stroke-width="2.7" stroke-linecap="round"/></svg>
<div class="t" style="left:1293.0px;top:883.09px;font-size:12px;line-height:15px;color:#1e1e1e;font-weight:normal;">07/01/18</div>
<div class="t" style="left:1748.8px;top:883.89px;font-size:12px;line-height:15px;color:#1e1e1e;font-weight:normal;">Course</div>
<div class="r" style="left:234.5px;top:938.65px;width:135.0px;height:1.00px;background:#ececec"></div>
<div class="r" style="left:370.5px;top:938.65px;width:254.5px;height:1.00px;background:#ececec"></div>
<div class="r" style="left:626.0px;top:938.65px;width:126.0px;height:1.00px;background:#ececec"></div>
<div class="r" style="left:753.0px;top:938.65px;width:149.0px;height:1.00px;background:#ececec"></div>
<div class="r" style="left:903.0px;top:938.65px;width:167.0px;height:1.00px;background:#ececec"></div>
<div class="r" style="left:1071.0px;top:938.65px;width:216.5px;height:1.00px;background:#ececec"></div>
<div class="r" style="left:1288.5px;top:938.65px;width:160.5px;height:1.00px;background:#ececec"></div>
<div class="r" style="left:1450.0px;top:938.65px;width:175.0px;height:1.00px;background:#ececec"></div>
<div class="r" style="left:1626.0px;top:938.65px;width:116.5px;height:1.00px;background:#ececec"></div>
<div class="r" style="left:1743.5px;top:938.65px;width:129.5px;height:1.00px;background:#ececec"></div>
<div class="t" style="left:240.0px;top:915.94px;font-size:12px;line-height:15px;color:#1e1e1e;font-weight:normal;">Elizabeth Mavery</div>
<div class="t" style="left:375.0px;top:915.94px;font-size:12px;line-height:15px;color:#1e1e1e;font-weight:normal;">ANO W24 Specialization1</div>
<div class="t" style="left:631.3px;top:915.94px;font-size:12px;line-height:15px;color:#1e1e1e;font-weight:normal;">Withdrawn</div>
<div class="t" style="left:758.3px;top:915.94px;font-size:12px;line-height:15px;color:#1e1e1e;font-weight:normal;">Voluntary</div>
<div class="t" style="left:1075.5px;top:915.94px;font-size:12px;line-height:15px;color:#1e1e1e;font-weight:normal;">0 / 3</div>
<div class="t" style="left:1293.0px;top:915.94px;font-size:12px;line-height:15px;color:#1e1e1e;font-weight:normal;">06/12/18</div>
<div class="t" style="left:1748.8px;top:916.74px;font-size:12px;line-height:15px;color:#1e1e1e;font-weight:normal;">Specialization</div>
<div class="r" style="left:234.5px;top:939.65px;width:135.0px;height:31.85px;background:#f8f8f8"></div>
<div class="r" style="left:369.5px;top:939.65px;width:255.5px;height:31.85px;background:#f8f8f8"></div>
<div class="r" style="left:625.0px;top:939.65px;width:127.0px;height:31.85px;background:#f8f8f8"></div>
<div class="r" style="left:752.0px;top:939.65px;width:150.0px;height:31.85px;background:#f8f8f8"></div>
<div class="r" style="left:1070.0px;top:939.65px;width:217.5px;height:31.85px;background:#f8f8f8"></div>
<div class="r" style="left:1287.5px;top:939.65px;width:161.5px;height:31.85px;background:#f8f8f8"></div>
<div class="r" style="left:1449.0px;top:939.65px;width:176.0px;height:31.85px;background:#f8f8f8"></div>
<div class="r" style="left:1625.0px;top:939.65px;width:117.5px;height:31.85px;background:#f8f8f8"></div>
<div class="r" style="left:1742.5px;top:939.65px;width:130.5px;height:31.85px;background:#f8f8f8"></div>
<div class="r" style="left:234.5px;top:971.50px;width:135.0px;height:1.00px;background:#ececec"></div>
<div class="r" style="left:370.5px;top:971.50px;width:254.5px;height:1.00px;background:#ececec"></div>
<div class="r" style="left:626.0px;top:971.50px;width:126.0px;height:1.00px;background:#ececec"></div>
<div class="r" style="left:753.0px;top:971.50px;width:149.0px;height:1.00px;background:#ececec"></div>
<div class="r" style="left:903.0px;top:971.50px;width:167.0px;height:1.00px;background:#ececec"></div>
<div class="r" style="left:1071.0px;top:971.50px;width:216.5px;height:1.00px;background:#ececec"></div>
<div class="r" style="left:1288.5px;top:971.50px;width:160.5px;height:1.00px;background:#ececec"></div>
<div class="r" style="left:1450.0px;top:971.50px;width:175.0px;height:1.00px;background:#ececec"></div>
<div class="r" style="left:1626.0px;top:971.50px;width:116.5px;height:1.00px;background:#ececec"></div>
<div class="r" style="left:1743.5px;top:971.50px;width:129.5px;height:1.00px;background:#ececec"></div>
<div class="t" style="left:240.0px;top:948.79px;font-size:12px;line-height:15px;color:#1e1e1e;font-weight:normal;">Elizabeth Mavery</div>
<div class="t" style="left:375.0px;top:948.79px;font-size:12px;line-height:15px;color:#1e1e1e;font-weight:normal;">ZWLF-EVAL-Course2</div>
<div class="t" style="left:631.3px;top:948.79px;font-size:12px;line-height:15px;color:#1e1e1e;font-weight:normal;">Not Started</div>
<div class="t" style="left:758.3px;top:948.79px;font-size:12px;line-height:15px;color:#1e1e1e;font-weight:normal;">Require</div>
<svg class="r" style="left:908.5px;top:949.95px" width="14" height="14" viewBox="0 0 14 14"><path d="M1.8 1.8l10.4 10.4M12.2 1.8l-10.4 10.4" stroke="#e0483b" stroke-width="2.7" stroke-linecap="round"/></svg>
<div class="t" style="left:1293.0px;top:948.79px;font-size:12px;line-height:15px;color:#1e1e1e;font-weight:normal;">05/25/18</div>
<div class="t" style="left:1748.8px;top:949.59px;font-size:12px;line-height:15px;color:#1e1e1e;font-weight:normal;">Course</div>
<div class="r" style="left:234.5px;top:1004.35px;width:135.0px;height:1.00px;background:#ececec"></div>
<div class="r" style="left:370.5px;top:1004.35px;width:254.5px;height:1.00px;background:#ececec"></div>
<div class="r" style="left:626.0px;top:1004.35px;width:126.0px;height:1.00px;background:#ececec"></div>
<div class="r" style="left:753.0px;top:1004.35px;width:149.0px;height:1.00px;background:#ececec"></div>
<div class="r" style="left:903.0px;top:1004.35px;width:167.0px;height:1.00px;background:#ececec"></div>
<div class="r" style="left:1071.0px;top:1004.35px;width:216.5px;height:1.00px;background:#ececec"></div>
<div class="r" style="left:1288.5px;top:1004.35px;width:160.5px;height:1.00px;background:#ececec"></div>
<div class="r" style="left:1450.0px;top:1004.35px;width:175.0px;height:1.00px;background:#ececec"></div>
<div class="r" style="left:1626.0px;top:1004.35px;width:116.5px;height:1.00px;background:#ececec"></div>
<div class="r" style="left:1743.5px;top:1004.35px;width:129.5px;height:1.00px;background:#ececec"></div>
<div class="t" style="left:240.0px;top:981.64px;font-size:12px;line-height:15px;color:#1e1e1e;font-weight:normal;">HNS ADMIN</div>
<div class="t" style="left:375.0px;top:981.64px;font-size:12px;line-height:15px;color:#1e1e1e;font-weight:normal;">VAM0701_REST_C1</div>
<div class="t" style="left:631.3px;top:981.64px;font-size:12px;line-height:15px;color:#1e1e1e;font-weight:normal;">No Offering Selected</div>
<div class="t" style="left:758.3px;top:981.64px;font-size:12px;line-height:15px;color:#1e1e1e;font-weight:normal;">Voluntary</div>
<svg class="r" style="left:908.5px;top:982.80px" width="14" height="14" viewBox="0 0 14 14"><path d="M1.8 1.8l10.4 10.4M12.2 1.8l-10.4 10.4" stroke="#e0483b" stroke-width="2.7" stroke-linecap="round"/></svg>
<div class="t" style="left:1293.0px;top:981.64px;font-size:12px;line-height:15px;color:#1e1e1e;font-weight:normal;">07/01/18</div>
<div class="t" style="left:1748.8px;top:982.44px;font-size:12px;line-height:15px;color:#1e1e1e;font-weight:normal;">Course</div>
<div class="r" style="left:234.5px;top:1005.35px;width:135.0px;height:31.85px;background:#f8f8f8"></div>
<div class="r" style="left:369.5px;top:1005.35px;width:255.5px;height:31.85px;background:#f8f8f8"></div>
<div class="r" style="left:625.0px;top:1005.35px;width:127.0px;height:31.85px;background:#f8f8f8"></div>
<div class="r" style="left:752.0px;top:1005.35px;width:150.0px;height:31.85px;background:#f8f8f8"></div>
<div class="r" style="left:1070.0px;top:1005.35px;width:217.5px;height:31.85px;background:#f8f8f8"></div>
<div class="r" style="left:1287.5px;top:1005.35px;width:161.5px;height:31.85px;background:#f8f8f8"></div>
<div class="r" style="left:1449.0px;top:1005.35px;width:176.0px;height:31.85px;background:#f8f8f8"></div>
<div class="r" style="left:1625.0px;top:1005.35px;width:117.5px;height:31.85px;background:#f8f8f8"></div>
<div class="r" style="left:1742.5px;top:1005.35px;width:130.5px;height:31.85px;background:#f8f8f8"></div>
<div class="r" style="left:234.5px;top:1037.20px;width:135.0px;height:1.00px;background:#ececec"></div>
<div class="r" style="left:370.5px;top:1037.20px;width:254.5px;height:1.00px;background:#ececec"></div>
<div class="r" style="left:626.0px;top:1037.20px;width:126.0px;height:1.00px;background:#ececec"></div>
<div class="r" style="left:753.0px;top:1037.20px;width:149.0px;height:1.00px;background:#ececec"></div>
<div class="r" style="left:903.0px;top:1037.20px;width:167.0px;height:1.00px;background:#ececec"></div>
<div class="r" style="left:1071.0px;top:1037.20px;width:216.5px;height:1.00px;background:#ececec"></div>
<div class="r" style="left:1288.5px;top:1037.20px;width:160.5px;height:1.00px;background:#ececec"></div>
<div class="r" style="left:1450.0px;top:1037.20px;width:175.0px;height:1.00px;background:#ececec"></div>
<div class="r" style="left:1626.0px;top:1037.20px;width:116.5px;height:1.00px;background:#ececec"></div>
<div class="r" style="left:1743.5px;top:1037.20px;width:129.5px;height:1.00px;background:#ececec"></div>
<div class="t" style="left:240.0px;top:1014.49px;font-size:12px;line-height:15px;color:#1e1e1e;font-weight:normal;">HNS ADMIN</div>
<div class="t" style="left:375.0px;top:1014.49px;font-size:12px;line-height:15px;color:#1e1e1e;font-weight:normal;">VAM0701_REST_C1</div>
<div class="t" style="left:631.3px;top:1014.49px;font-size:12px;line-height:15px;color:#1e1e1e;font-weight:normal;">No Offering Selected</div>
<div class="t" style="left:758.3px;top:1014.49px;font-size:12px;line-height:15px;color:#1e1e1e;font-weight:normal;">Voluntary</div>
<svg class="r" style="left:908.5px;top:1015.65px" width="14" height="14" viewBox="0 0 14 14"><path d="M1.8 1.8l10.4 10.4M12.2 1.8l-10.4 10.4" stroke="#e0483b" stroke-width="2.7" stroke-linecap="round"/></svg>
<div class="t" style="left:1293.0px;top:1014.49px;font-size:12px;line-height:15px;color:#1e1e1e;font-weight:normal;">07/01/18</div>
<div class="t" style="left:1748.8px;top:1015.29px;font-size:12px;line-height:15px;color:#1e1e1e;font-weight:normal;">Course</div>
<div class="r" style="left:234.5px;top:1070.05px;width:135.0px;height:1.00px;background:#ececec"></div>
<div class="r" style="left:370.5px;top:1070.05px;width:254.5px;height:1.00px;background:#ececec"></div>
<div class="r" style="left:626.0px;top:1070.05px;width:126.0px;height:1.00px;background:#ececec"></div>
<div class="r" style="left:753.0px;top:1070.05px;width:149.0px;height:1.00px;background:#ececec"></div>
<div class="r" style="left:903.0px;top:1070.05px;width:167.0px;height:1.00px;background:#ececec"></div>
<div class="r" style="left:1071.0px;top:1070.05px;width:216.5px;height:1.00px;background:#ececec"></div>
<div class="r" style="left:1288.5px;top:1070.05px;width:160.5px;height:1.00px;background:#ececec"></div>
<div class="r" style="left:1450.0px;top:1070.05px;width:175.0px;height:1.00px;background:#ececec"></div>
<div class="r" style="left:1626.0px;top:1070.05px;width:116.5px;height:1.00px;background:#ececec"></div>
<div class="r" style="left:1743.5px;top:1070.05px;width:129.5px;height:1.00px;background:#ececec"></div>
<div class="t" style="left:240.0px;top:1047.34px;font-size:12px;line-height:15px;color:#1e1e1e;font-weight:normal;">HNS ADMIN</div>
<div class="t" style="left:375.0px;top:1047.34px;font-size:12px;line-height:15px;color:#1e1e1e;font-weight:normal;">ZWLF-EVAL-Course2</div>
<div class="t" style="left:631.3px;top:1047.34px;font-size:12px;line-height:15px;color:#1e1e1e;font-weight:normal;">Not Started</div>
<div class="t" style="left:758.3px;top:1047.34px;font-size:12px;line-height:15px;color:#1e1e1e;font-weight:normal;">Require</div>
<svg class="r" style="left:908.5px;top:1048.50px" width="14" height="14" viewBox="0 0 14 14"><path d="M1.8 1.8l10.4 10.4M12.2 1.8l-10.4 10.4" stroke="#e0483b" stroke-width="2.7" stroke-linecap="round"/></svg>
<div class="t" style="left:1293.0px;top:1047.34px;font-size:12px;line-height:15px;color:#1e1e1e;font-weight:normal;">05/25/18</div>
<div class="t" style="left:1748.8px;top:1048.14px;font-size:12px;line-height:15px;color:#1e1e1e;font-weight:normal;">Course</div>
</body></html>
